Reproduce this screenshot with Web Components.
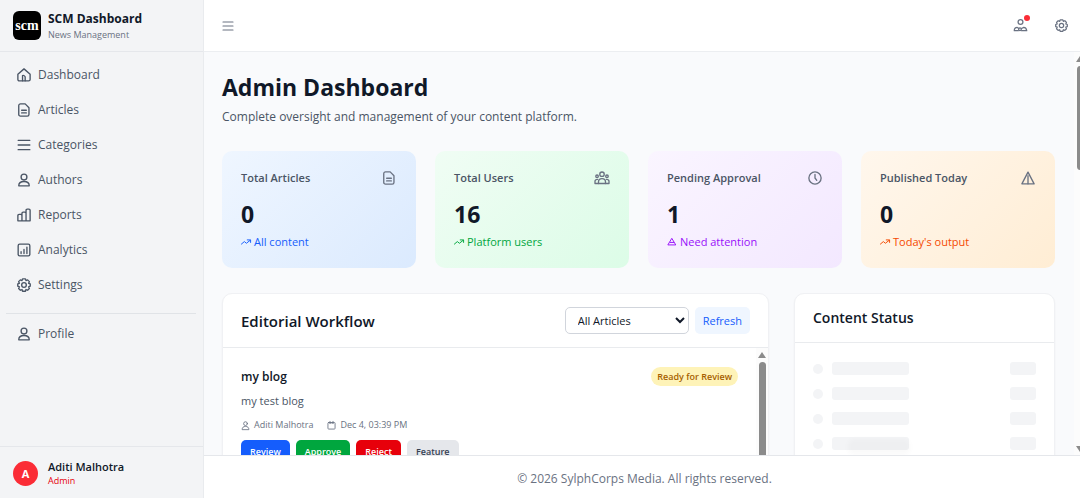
<!DOCTYPE html>
<html lang="en">
<head>
<meta charset="utf-8">
<meta name="viewport" content="width=device-width, initial-scale=1">
<title>SCM Dashboard</title>
<style>
  html, body { margin: 0; height: 100%; }
  body { font-family: "Open Sans", "Noto Sans", sans-serif; font-size: 12px; line-height: 20px; color: #101828; background: #f9fafb; overflow: hidden; }
</style>
</head>
<body>
<app-shell>
  <side-bar slot="side"></side-bar>
  <top-bar slot="top"></top-bar>
  <dashboard-page slot="main"></dashboard-page>
  <page-footer slot="foot">© 2026 SylphCorps Media. All rights reserved.</page-footer>
</app-shell>
<script>
const ICONS = {
  home: '<path d="M1.500 10.800 12 1.500l10.500 9.300V19.500a2.500 2.500 0 0 1-2.500 2.500H4a2.500 2.500 0 0 1-2.500-2.500z"/><path d="M9.500 22v-9q2.500-1 4.500 2v7"/>',
  doc: '<path d="M6 1.500h8l6.500 6.500V19.500a3 3 0 0 1-3 3H6a3 3 0 0 1-3-3V4.500a3 3 0 0 1 3-3z"/><path d="M8 12.500h8M8 17h8"/>',
  menu: '<path d="M2 4h20M2 12h20M2 20h20"/>',
  user: '<circle cx="12" cy="7" r="5"/><path d="M3 22c0-5 3.500-7.500 9-7.500s9 2.500 9 7.500z"/>',
  reports: '<path d="M1.500 22V13a2 2 0 0 1 2-2h3a2 2 0 0 1 2 2v9zM8.500 22V9a2 2 0 0 1 2-2h3a2 2 0 0 1 2 2v13zM15.500 22V4a2 2 0 0 1 2-2h3a2 2 0 0 1 2 2v18z"/>',
  analytics: '<rect x="2" y="2" width="20" height="20" rx="2.500"/><path d="M7 18v-3M12 18v-7M17 18V7"/>',
  gear: '<path d="M9.500 1.500h5l.9 2.900 2.800-1.200 3 3-1.300 2.900 2.800 1v4l-2.800 1 1.300 2.900-3 3-2.800-1.200-.9 2.900h-5l-.9-2.900-2.800 1.200-3-3 1.300-2.900-2.800-1v-4l2.800-1L2.800 6.200l3-3 2.800 1.200z"/><circle cx="12" cy="12" r="4"/>',
  group: '<circle cx="12" cy="5.500" r="3.800"/><path d="M6 21.500v-3c0-3.500 2-5.500 6-5.500s6 2 6 5.500v3z"/><circle cx="3.500" cy="9" r="2.200"/><circle cx="20.500" cy="9" r="2.200"/><path d="M6 21.500H0v-4c0-2 1-3.200 4.500-3.200M18 21.500h6v-4c0-2-1-3.200-4.500-3.200"/>',
  clock: '<circle cx="12" cy="12" r="10.500"/><path d="M12 6v6l3 4"/>',
  alert: '<path d="M12 2 22.500 22h-21z"/><path d="M12 8v14"/>',
  warn: '<path d="M12 4 21 19H3z"/><path d="M8 13h8"/>',
  trend: '<path d="M1 17 8 11l5 4L22 8M15 7h8v6"/>',
  calendar: '<rect x="2.500" y="4" width="19" height="17.500" rx="2"/><path d="M8 1v6M16 1v6M8 5h8"/>',
  people: '<circle cx="12" cy="5.500" r="4.500"/><circle cx="11" cy="19" r="2.500"/><path d="M8 21.500H.500c0-4 2-6 5.500-6l3 2M14 21.500h9.500c-.5-4-2.500-6-5.500-6l-4 2"/>'
};

function define(name, html, setup) {
  const tpl = document.createElement('template');
  tpl.innerHTML = html;
  customElements.define(name, class extends HTMLElement {
    connectedCallback() {
      if (this.shadowRoot) return;
      const root = this.attachShadow({ mode: 'open' });
      root.append(tpl.content.cloneNode(true));
      if (setup) setup(this, root);
    }
  });
}

define('ui-icon', `<style>
  :host { display: inline-flex; flex: none; width: var(--size, 14px); height: var(--size, 14px); }
  svg { width: 100%; height: 100%; fill: none; stroke: currentColor; stroke-width: 2.3; stroke-linejoin: round; stroke-linecap: round; overflow: visible; }
</style><svg viewBox="0 0 24 24" aria-hidden="true"></svg>`,
(el, root) => { root.querySelector('svg').innerHTML = ICONS[el.getAttribute('name')]; });

define('app-shell', `<style>
  :host { display: grid; grid-template-columns: 204px minmax(0, 1fr); height: 100vh; }
  .column { display: flex; flex-direction: column; min-width: 0; min-height: 0; }
  .main { flex: 1; min-height: 0; display: flex; }
</style><slot name="side"></slot>
<div class="column"><slot name="top"></slot><main class="main"><slot name="main"></slot></main><slot name="foot"></slot></div>`);

define('nav-item', `<style>
  :host { display: block; }
  a { display: flex; align-items: center; gap: 7px; height: 35px; padding: 0 11px; color: #4a5565; text-decoration: none; font-size: 12px; }
</style><a href="#"><ui-icon></ui-icon><slot></slot></a>`,
(el, root) => {
  const icon = document.createElement('ui-icon');
  icon.setAttribute('name', el.getAttribute('icon'));
  root.querySelector('ui-icon').replaceWith(icon);
});
</script>
<script>
define('side-bar', `<style>
  :host { display: flex; flex-direction: column; box-sizing: border-box; background: #f3f4f6; border-right: 1px solid #e9ebee; min-height: 0; }
  header { display: flex; align-items: center; gap: 7px; height: 51px; padding: 0 13px; border-bottom: 1px solid #e5e7eb; }
  .logo { display: flex; align-items: center; justify-content: center; width: 28px; height: 29px; border-radius: 6px; background: #000; color: #fff; font: bold 14px/20px "Liberation Serif", serif; }
  .brand { padding-top: 2px; }
  .name { font-size: 12px; line-height: 16px; font-weight: 700; }
  .sub { font-size: 9px; line-height: 16px; color: #6a7282; }
  nav { flex: 1; min-height: 0; padding: 5px 6px; }
  hr { margin: 11px 1px 2px 0; border: 0; border-top: 1px solid #e0e3e7; }
  footer { display: flex; align-items: center; gap: 10px; height: 52px; padding: 2px 13px 0; box-sizing: border-box; border-top: 1px solid #e5e7eb; }
  .avatar { display: flex; align-items: center; justify-content: center; width: 25px; height: 25px; border-radius: 50%; background: #fb2c36; color: #fff; font-size: 11px; font-weight: 700; }
  .who { font-size: 11px; line-height: 15px; font-weight: 600; }
  .role { font-size: 9px; line-height: 14px; color: #e7000b; }
</style>
<header><div class="logo">scm</div><div class="brand"><div class="name">SCM Dashboard</div><div class="sub">News Management</div></div></header>
<nav>
  <nav-item icon="home">Dashboard</nav-item><nav-item icon="doc">Articles</nav-item><nav-item icon="menu">Categories</nav-item>
  <nav-item icon="user">Authors</nav-item><nav-item icon="reports">Reports</nav-item><nav-item icon="analytics">Analytics</nav-item>
  <nav-item icon="gear">Settings</nav-item><hr><nav-item icon="user">Profile</nav-item>
</nav>
<footer><div class="avatar">A</div><div><div class="who">Aditi Malhotra</div><div class="role">Admin</div></div></footer>`);

define('top-bar', `<style>
  :host { display: flex; flex: none; align-items: center; height: 51px; padding: 0 12px 0 18px; background: #fff; border-bottom: 1px solid #eceef1; color: #6a7282; }
  button { position: relative; display: flex; padding: 0; border: 0; background: none; color: inherit; }
  .menu { --size: 12px; margin-right: auto; }
  .people { --size: 13px; margin-right: 28px; }
  .gear { --size: 13px; }
  .dot { position: absolute; top: -4px; right: -3px; width: 6px; height: 6px; border-radius: 50%; background: #fb2c36; }
</style>
<button class="menu" aria-label="Toggle menu"><ui-icon name="menu"></ui-icon></button>
<button class="people" aria-label="Notifications"><ui-icon name="people"></ui-icon><span class="dot"></span></button>
<button class="gear" aria-label="Settings"><ui-icon name="gear"></ui-icon></button>`);

define('page-footer', `<style>
  :host { display: block; flex: none; padding: 13px 0 9px 5px; background: #fff; border-top: 1px solid #e5e7eb; text-align: center; font-size: 12px; line-height: 20px; color: #6a7282; }
</style><slot></slot>`);

define('scroll-bar', `<style>
  :host { display: flex; flex-direction: column; align-items: center; width: 12px; background: #fcfcfc; overflow: hidden; }
  .arrow { flex: none; margin: 4px 0; border: 4px solid transparent; border-top: 0; border-bottom: 6px solid #8b8b8b; }
  .arrow.down { margin-top: auto; margin-bottom: 3px; border-bottom: 0; border-top: 6px solid #8b8b8b; }
  .thumb { flex: 0 0 var(--thumb, 104px); width: 7px; border-radius: 4px; background: #8b8b8b; }
</style><i class="arrow"></i><i class="thumb"></i><i class="arrow down"></i>`);

define('stat-card', `<style>
  :host { display: block; padding: 19px 19px 18px; border-radius: 10px; background: linear-gradient(135deg, var(--from), var(--to)); }
  .top { display: flex; align-items: center; justify-content: space-between; height: 16px; font-size: 11px; font-weight: 600; color: #4a5565; white-space: nowrap; }
  ::slotted([slot="icon"]) { --size: 14px; color: #6a7282; margin-right: 1px; }
  ::slotted([slot="note-icon"]) { --size: 10px; }
  .value { margin-top: 12px; font-size: 23px; line-height: 32px; font-weight: 700; }
  .note { display: flex; align-items: center; gap: 3px; margin-top: 4px; font-size: 11px; line-height: 16px; color: var(--ink); }
</style><div class="top"><slot name="label"></slot><slot name="icon"></slot></div><div class="value"><slot></slot></div><div class="note"><slot name="note-icon"></slot><slot name="note"></slot></div>`);

define('panel-card', `<style>
  :host { display: block; background: #fff; border: 1px solid #f0f1f4; border-radius: 10px; box-shadow: 0 1px 2px #0000000d; overflow: hidden; min-width: 0; }
  header { display: flex; align-items: center; gap: 6px; padding: 13px 18px; border-bottom: 1px solid #e9ebee; }
  h2 { margin: 0 auto 0 0; font-size: var(--title, 15px); line-height: 22px; font-weight: 600; white-space: nowrap; }
</style><header><h2><slot name="title"></slot></h2><slot name="tools"></slot></header><slot></slot>`);

define('article-item', `<style>
  :host { display: block; flex: 1; padding: 19px 18px; min-width: 0; }
  .head { display: flex; align-items: center; justify-content: space-between; height: 19px; }
  h3 { margin: 0; font-size: 12px; line-height: 19px; font-weight: 600; }
  .badge { padding: 0 6px; border-radius: 10px; background: #fef3b8; color: #a65f00; font-size: 9px; line-height: 19px; font-weight: 600; }
  p { margin: 6px 0 7px; font-size: 11px; line-height: 18px; color: #4a5565; }
  .meta { display: flex; gap: 14px; font-size: 9px; line-height: 16px; color: #6a7282; }
  .meta span { display: flex; align-items: center; gap: 4px; }
  .meta ui-icon { --size: 9px; }
  .actions { display: flex; gap: 6px; margin-top: 7px; }
  button { height: 24px; padding: 0 9px; border: 0; border-radius: 5px; font: 600 9px/16px "Open Sans", sans-serif; color: #fff; }
  .review { background: #155dfc; } .approve { background: #00a63e; } .reject { background: #e7000b; }
  .feature { background: #e5e7eb; color: #364153; }
</style>
<div class="head"><h3>my blog</h3><span class="badge">Ready for Review</span></div>
<p>my test blog</p>
<div class="meta"><span><ui-icon name="user"></ui-icon>Aditi Malhotra</span><span><ui-icon name="calendar"></ui-icon>Dec 4, 03:39 PM</span></div>
<div class="actions"><button class="review">Review</button><button class="approve">Approve</button><button class="reject">Reject</button><button class="feature">Feature</button></div>`);

define('skeleton-row', `<style>
  :host { display: flex; align-items: center; height: 13px; }
  i { border-radius: 3px; background: #f3f4f6; height: 13px; }
  .dot { width: 10px; height: 10px; border-radius: 50%; margin-right: 9px; }
  .bar { width: 77px; margin-right: auto; }
  .count { width: 26px; }
</style><i class="dot"></i><i class="bar"></i><i class="count"></i>`);

define('dashboard-page', `<style>
  :host { position: relative; display: block; flex: 1; min-width: 0; padding: 19px 25px 0 18px; background: #f9fafc; overflow: hidden; }
  h1 { margin: 0; font-size: 23px; line-height: 32px; font-weight: 700; }
  .lead { margin: 4px 0 24px; font-size: 12px; line-height: 20px; color: #4a5565; }
  .stats { display: grid; grid-template-columns: repeat(4, minmax(0, 1fr)); gap: 19px; }
  .panels { display: grid; grid-template-columns: repeat(3, minmax(0, 1fr)); gap: 25px; margin-top: 25px; }
  .wide { grid-column: span 2; }
  .narrow { --title: 14px; }
  select { box-sizing: border-box; width: 124px; height: 27px; padding: 0 0 0 8px; border: 1px solid #d1d5dc; border-radius: 5px; background: #fff; color: #101828; font: 11px/16px "Open Sans", sans-serif; }
  .refresh { height: 27px; padding: 0 8px; border: 0; border-radius: 5px; background: #eff6ff; color: #155dfc; font: 11px/16px "Open Sans", sans-serif; }
  .list { display: flex; height: 307px; }
  .list scroll-bar { --thumb: 220px; }
  .rows { display: flex; flex-direction: column; gap: 12px; padding: 19px 18px; }
  .page-scroll { position: absolute; top: 0; right: -6px; bottom: 0; }
  .toast-fade { position: absolute; right: 170px; bottom: 0; width: 62px; height: 16px; border-radius: 6px; background: #00000005; filter: blur(2px); }
</style>
<h1>Admin Dashboard</h1>
<p class="lead">Complete oversight and management of your content platform.</p>
<section class="stats">
  <stat-card style="--from:#eff6ff;--to:#dbeafe;--ink:#155dfc"><span slot="label">Total Articles</span><ui-icon slot="icon" name="doc"></ui-icon>0<ui-icon slot="note-icon" name="trend"></ui-icon><span slot="note">All content</span></stat-card>
  <stat-card style="--from:#f0fdf4;--to:#dcfce7;--ink:#00a63e"><span slot="label">Total Users</span><ui-icon slot="icon" name="group"></ui-icon>16<ui-icon slot="note-icon" name="trend"></ui-icon><span slot="note">Platform users</span></stat-card>
  <stat-card style="--from:#faf5ff;--to:#f3e8ff;--ink:#9810fa"><span slot="label">Pending Approval</span><ui-icon slot="icon" name="clock"></ui-icon>1<ui-icon slot="note-icon" name="warn"></ui-icon><span slot="note">Need attention</span></stat-card>
  <stat-card style="--from:#fff7ed;--to:#ffedd4;--ink:#f54900"><span slot="label">Published Today</span><ui-icon slot="icon" name="alert"></ui-icon>0<ui-icon slot="note-icon" name="trend"></ui-icon><span slot="note">Today's output</span></stat-card>
</section>
<section class="panels">
  <panel-card class="wide"><span slot="title">Editorial Workflow</span>
    <select slot="tools" aria-label="Filter articles"><option>All Articles</option><option>Ready for Review</option></select>
    <button slot="tools" class="refresh">Refresh</button>
    <div class="list"><article-item></article-item><scroll-bar></scroll-bar></div>
  </panel-card>
  <panel-card class="narrow"><span slot="title">Content Status</span>
    <div class="rows"><skeleton-row></skeleton-row><skeleton-row></skeleton-row><skeleton-row></skeleton-row><skeleton-row></skeleton-row><skeleton-row></skeleton-row></div>
  </panel-card>
</section>
<div class="toast-fade"></div>
<scroll-bar class="page-scroll"></scroll-bar>`);
</script>
</body>
</html>
